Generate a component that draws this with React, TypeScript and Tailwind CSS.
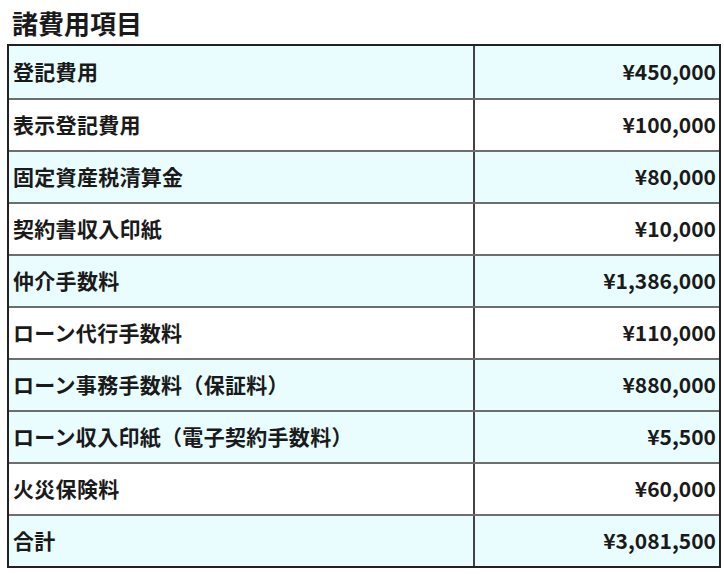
import React from 'react';

const rows = [
  { label: '登記費用', amount: '¥450,000', tint: true },
  { label: '表示登記費用', amount: '¥100,000', tint: false },
  { label: '固定資産税清算金', amount: '¥80,000', tint: true },
  { label: '契約書収入印紙', amount: '¥10,000', tint: false },
  { label: '仲介手数料', amount: '¥1,386,000', tint: true },
  { label: 'ローン代行手数料', amount: '¥110,000', tint: false },
  { label: 'ローン事務手数料（保証料）', amount: '¥880,000', tint: true },
  { label: 'ローン収入印紙（電子契約手数料）', amount: '¥5,500', tint: true },
  { label: '火災保険料', amount: '¥60,000', tint: false },
  { label: '合計', amount: '¥3,081,500', tint: true },
];

const App = () => {
  return (
    <div
      className="w-[724px] h-[574px] bg-white text-[#1a1a1a] [text-spacing-trim:space-all]"
      style={{ fontFamily: '"Noto Sans CJK JP", "Noto Sans", sans-serif' }}
    >
      <div className="h-[44px] flex items-center pl-[12px] pt-[1px]">
        <h1 className="text-[26px] font-bold leading-none">諸費用項目</h1>
      </div>
      <div className="ml-[7px] w-[714px] border-2 border-[#222]">
        {rows.map((row, i) => (
          <div
            key={row.label}
            className={`flex h-[52px] ${i > 0 ? 'border-t-2 border-[#6e6e6e]' : ''} ${
              row.tint ? 'bg-[#e9fdfe]' : 'bg-white'
            }`}
          >
            <div className="w-[464px] flex items-center pl-[4px] text-[21px] font-bold tracking-[0.3px] [font-feature-settings:'fwid']">
              {row.label}
            </div>
            <div className="flex-1 flex items-center justify-end pr-[3px] border-l-2 border-[#444] text-[21px] font-bold">
              {row.amount}
            </div>
          </div>
        ))}
      </div>
    </div>
  );
};

export default App;
